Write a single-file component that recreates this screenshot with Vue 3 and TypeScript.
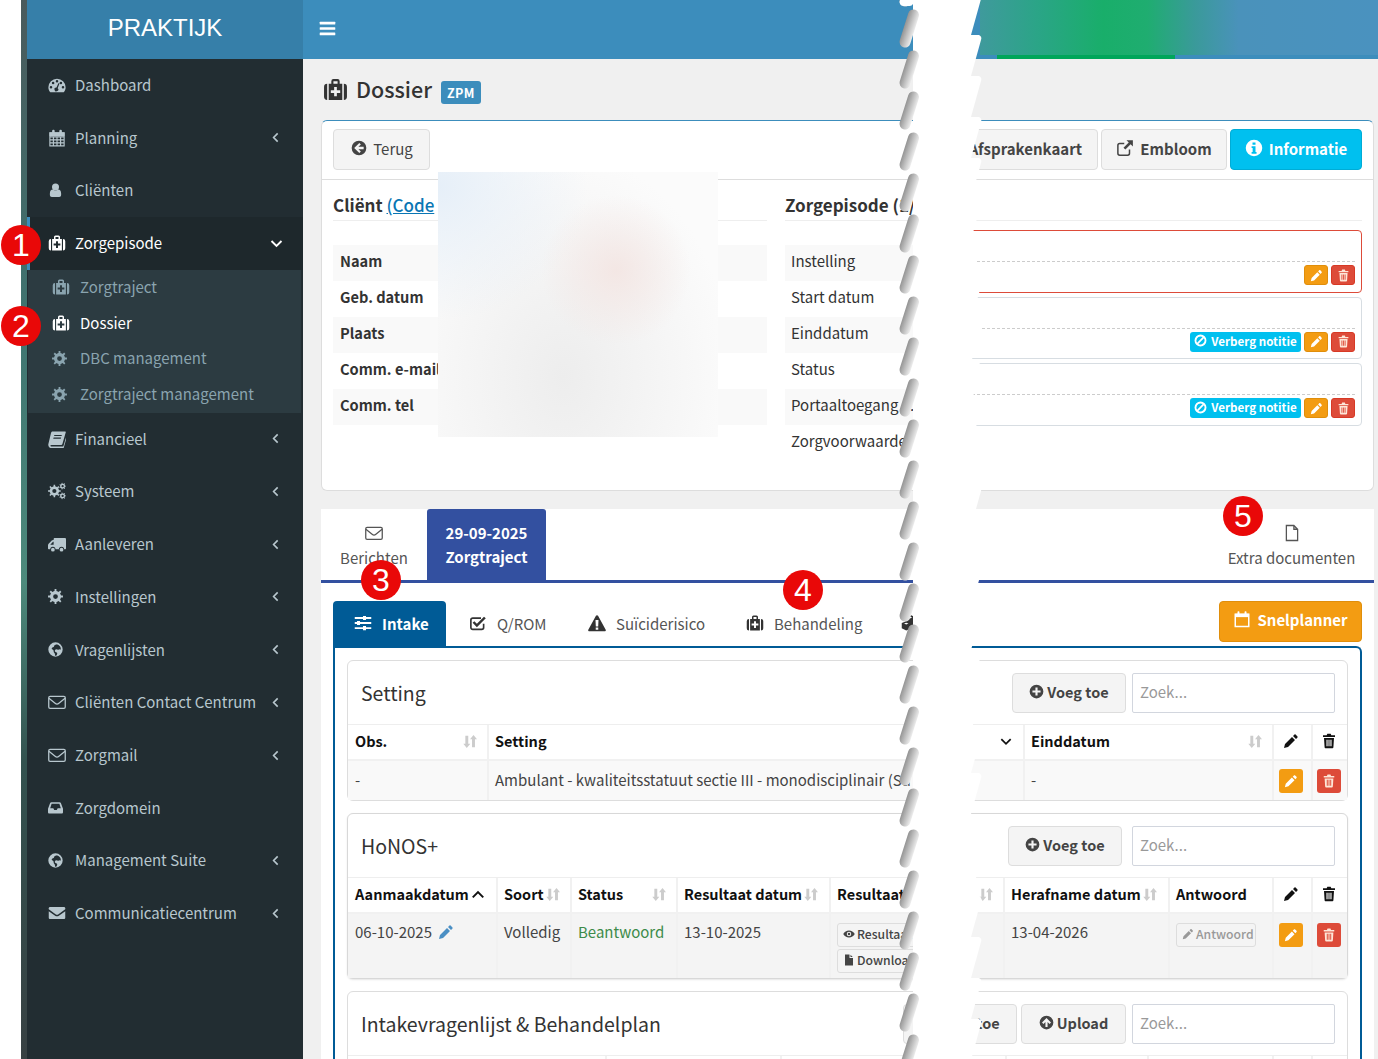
<script setup lang="ts">
// small gear outline, used by the cog icons
function gear(cx: number, cy: number, r: number, hole: number, teeth = 8): string {
  const pts: string[] = []
  const step = (Math.PI * 2) / teeth
  for (let i = 0; i < teeth; i++) {
    const a = i * step
    const w = step * 0.22
    const inner = r * 0.74
    const p = [
      [a - step / 2 + w, inner], [a - w, inner], [a - w * 0.7, r], [a + w * 0.7, r], [a + w, inner],
    ]
    for (const [ang, rad] of p) {
      pts.push(`${(cx + Math.cos(ang) * rad).toFixed(2)} ${(cy + Math.sin(ang) * rad).toFixed(2)}`)
    }
  }
  const h = hole
  return `M${pts.join('L')}ZM${cx - h} ${cy}a${h} ${h} 0 1 0 ${h * 2} 0a${h} ${h} 0 1 0 ${-h * 2} 0Z`
}

const icons: Record<string, string> = {
  dashboard: '<path fill-rule="evenodd" d="M12 3.500A11.500 11.500 0 0 0 .5 15c0 2.600.8 4.600 2.200 6.300.3.300.6.400 1 .400h16.600c.4 0 .7-.1 1-.4 1.400-1.700 2.200-3.700 2.200-6.300A11.500 11.500 0 0 0 12 3.500zM4 13.200a1.700 1.700 0 1 0 0 3.400 1.700 1.700 0 1 0 0-3.400zM6.800 7.600a1.700 1.700 0 1 0 0 3.400 1.700 1.700 0 1 0 0-3.400zM12 5.200a1.700 1.700 0 1 0 0 3.400 1.700 1.700 0 1 0 0-3.400zM17.200 7.600a1.700 1.700 0 1 0 0 3.400 1.700 1.700 0 1 0 0-3.400zM20 13.200a1.700 1.700 0 1 0 0 3.400 1.700 1.700 0 1 0 0-3.400zM13.800 9.500l-2.600 6a2.500 2.500 0 1 0 1.700.7l2.400-6.100z"/>',
  calendar: '<path fill="none" stroke="currentColor" stroke-width="1.500" d="M2.500 5h19v17.500h-19zM2.500 10.500h19M2.500 14.500h19M2.500 18.500h19M7.200 10.500v12M12 10.500v12M16.800 10.500v12"/><rect x="2" y="4.500" width="20" height="5"/><rect x="5.500" y="1" width="3.400" height="6" rx="1.500"/><rect x="15.100" y="1" width="3.400" height="6" rx="1.500"/>',
  user: '<circle cx="12" cy="7" r="5.600"/><path d="M3 20v-2.500c0-4 1.800-6.500 4.800-6.500 1.200 1 2.600 1.600 4.200 1.600s3-.6 4.200-1.600c3 0 4.800 2.500 4.800 6.500V20c0 2-1.400 3-3 3H6c-1.600 0-3-1-3-3z"/>',
  medkit: '<path fill-rule="evenodd" d="M5.500 6.500H8V4a2 2 0 0 1 2-2h4a2 2 0 0 1 2 2v2.500h2.500V22h-13zM10 4v2.500h4V4zM10.700 9.500v3.200H7.500v2.600h3.200v3.200h2.600v-3.200h3.200v-2.600h-3.200V9.500z"/><path d="M4 6.500V22a3 3 0 0 1-3-3V9.500a3 3 0 0 1 3-3zM20 6.500a3 3 0 0 1 3 3V19a3 3 0 0 1-3 3z"/>',
  cog: `<path fill-rule="evenodd" d="${gear(12, 12, 12, 3.8)}"/>`,
  book: '<path fill-rule="evenodd" d="M6 2h17c.6 0 .9.500.7 1l-4.500 15.500c-.3.900-1 1.500-2 1.500H4.500c-.8 0-1.200.300-1.300.8-.1.500.3 1.200 1.300 1.200h15c.5 0 1-.3 1.100-.8l4-13.200.400 1.500-4 14c-.2.600-.8 1-1.500 1H4.500C2 24-.2 21.500.5 18.500L4 4c.3-1.200 1-2 2-2zM8.500 6.500l-.5 1.500h10l.5-1.500zM7.500 10l-.5 1.500h10l.5-1.500z"/>',
  cogs: `<path fill-rule="evenodd" d="${gear(8.5, 12, 8.5, 2.8)}"/><path fill-rule="evenodd" d="${gear(19.5, 5.5, 4.5, 1.5, 7)}"/><path fill-rule="evenodd" d="${gear(19.5, 18.5, 4.5, 1.5, 7)}"/>`,
  truck: '<path fill-rule="evenodd" d="M9 4h13.500c.8 0 1.500.7 1.500 1.500V18c0 .6-.4 1-1 1h-1.500a3.500 3.500 0 0 0-7 0H10a3.500 3.500 0 0 0-7 0H1c-.6 0-1-.4-1-1v-4.500c0-.8.300-1.400.8-2L5 7.300c.4-.5 1-.8 1.700-.8H7.500V5.500C7.500 4.700 8.200 4 9 4zM3 13h4.500V9H6.700z"/><circle cx="6.500" cy="19.500" r="2.500"/><circle cx="18" cy="19.500" r="2.500"/>',
  globe: '<path fill-rule="evenodd" d="M12 .5a11.500 11.500 0 1 0 0 23 11.500 11.500 0 0 0 0-23zM14 3.500c2 .5 3.800 1.600 5 3.200 1.200 1.500 1.600 3.300 1.500 5.300-.7.300-1.200-.4-1.900-.4-1 0-1.300 1-2.400.7-1.500-.3-2.800-1-4-.5-1.200.6-1.600 2.700-.7 3.800.8 1 2.300.8 3 1.600.5.800.2 1.800-.1 2.700-.5 1-1.100 2-2.300 2.400-.8-.6-1-1.700-1-2.700 0-1.300-.8-1.800-1.500-2.800-.8-1.200-.2-2.600-1-3.700-.7-.9-2-.9-2.500-1.900-.3-.6-.1-1.400.4-1.900.9-.9 2.200-.7 2.900-1.700.5-.8.300-1.800 1-2.500.9-.8 2.400-.8 3.600-1.100z"/>',
  envelopeO: '<path fill="none" stroke="currentColor" stroke-width="1.700" d="M2.800 4.500h18.400c1 0 1.800.8 1.800 1.800v12.400c0 1-.8 1.800-1.800 1.800H2.800c-1 0-1.800-.8-1.800-1.800V6.300c0-1 .8-1.800 1.800-1.800z"/><path fill="none" stroke="currentColor" stroke-width="1.700" d="M1.200 7l8.300 6.800c1.500 1.200 3.500 1.200 5 0L22.800 7"/>',
  inbox: '<path fill-rule="evenodd" d="M5.500 3.500h13c.9 0 1.700.500 2.100 1.300L24 14v5.500c0 1.100-.9 2-2 2H2c-1.100 0-2-.9-2-2V14L3.400 4.800c.4-.8 1.200-1.300 2.100-1.300zM5.800 6L3.500 13h5l1.500 3h4l1.500-3h5L18.200 6z"/>',
  envelope: '<path d="M1 7l9.500 7c.9.600 2.100.600 3 0L23 7V5.800C23 4.800 22.200 4 21.200 4H2.800C1.800 4 1 4.800 1 5.800z"/><path d="M1 9.500V18.200c0 1 .8 1.800 1.800 1.800h18.400c1 0 1.800-.8 1.800-1.800V9.500l-8.500 6.200c-1.500 1-3.500 1-5 0z"/>',
  angleLeft: '<path fill="none" stroke="currentColor" stroke-width="2.600" d="M15.500 5.500 9 12l6.500 6.500"/>',
  angleDown: '<path fill="none" stroke="currentColor" stroke-width="3" d="M4 8l8 8 8-8"/>',
  angleUp: '<path fill="none" stroke="currentColor" stroke-width="3.400" d="M3 17l9-9 9 9"/>',
  bars: '<rect x="1" y="2.500" width="22" height="3.800" rx=".8"/><rect x="1" y="10.100" width="22" height="3.800" rx=".8"/><rect x="1" y="17.700" width="22" height="3.800" rx=".8"/>',
  backCircle: '<path fill-rule="evenodd" d="M12 1a11 11 0 1 0 0 22 11 11 0 0 0 0-22zM12.500 4.500l2.300 2.300-3.700 3.500H19v3.400h-7.900l3.700 3.500-2.300 2.300L4.800 12z"/>',
  plusCircle: '<path fill-rule="evenodd" d="M12 1a11 11 0 1 0 0 22 11 11 0 0 0 0-22zM10.300 5.500h3.400v4.800h4.800v3.400h-4.800v4.800h-3.400v-4.800H5.500v-3.400h4.800z"/>',
  upCircle: '<path fill-rule="evenodd" d="M12 1a11 11 0 1 0 0 22 11 11 0 0 0 0-22zM12 4.800l7.200 7.200-2.300 2.300-3.200-3.200V19h-3.400v-7.900l-3.200 3.200L4.800 12z"/>',
  external: '<path fill="none" stroke="currentColor" stroke-width="2" d="M18 14v5c0 1.400-1 2.500-2.500 2.500H5C3.500 21.500 2.500 20.500 2.500 19V8.500C2.500 7 3.500 6 5 6h6"/><path d="M14 1.500h8.500V10l-3-3-7 7-2.500-2.500 7-7z"/>',
  info: '<path fill-rule="evenodd" d="M12 1a11 11 0 1 0 0 22 11 11 0 0 0 0-22zM10 4.500h4v3.200h-4zM8.800 9.800H14v7.500h1.400v2.200H8.800v-2.200h1.400v-5.300H8.800z"/>',
  ban: '<path fill-rule="evenodd" d="M12 1a11 11 0 1 0 0 22 11 11 0 0 0 0-22zM12 4.500c1.500 0 2.900.5 4 1.200L5.700 16A7.500 7.500 0 0 1 12 4.500zM18.300 8A7.500 7.500 0 0 1 8 18.300z"/>',
  pencil: '<path d="M17 2.500c.6-.6 1.500-.6 2.100 0l2.400 2.400c.6.600.6 1.500 0 2.100l-2 2L15 4.500zM13.500 6 18 10.500 7.500 21 1.500 22.500 3 16.500z"/>',
  trash: '<path fill-rule="evenodd" d="M8.500 3.500 9.500 1h5l1 2.500H21V6H3V3.500zM4.500 7.500h15l-.9 14c-.1 1-.9 1.500-1.600 1.500H7c-.8 0-1.500-.6-1.600-1.500zM8.200 10v10h1.700V10zM11.200 10v10h1.600V10zM14.100 10v10h1.700V10z"/>',
  calendarO: '<path fill="none" stroke="currentColor" stroke-width="2" d="M3 5.500h18v16.500H3z"/><rect x="3" y="5" width="18" height="4.500"/><rect x="6" y="1.500" width="2.600" height="5.500" rx="1"/><rect x="15.400" y="1.500" width="2.600" height="5.500" rx="1"/>',
  fileO: '<path fill="none" stroke="currentColor" stroke-width="1.700" d="M4.500 2h10l5 5v15h-15zM14.500 2v5h5"/>',
  eye: '<path fill-rule="evenodd" d="M12 5C7 5 3 8 .5 12c2.500 4 6.500 7 11.500 7s9-3 11.500-7C21 8 17 5 12 5zM12 7.500a4.500 4.500 0 1 1 0 9 4.500 4.500 0 0 1 0-9z"/><circle cx="12" cy="12" r="2.500"/>',
  file: '<path d="M4 1h9v7h7v15H4zM15 1.500 19.500 6H15z"/>',
  sliders: '<path fill-rule="evenodd" d="M1 4h11V2.500h4V4h7v2.500h-7V8h-4V6.500H1zM1 10.700h3V9.200h4v1.500h15v2.600H8v1.500H4v-1.500H1zM1 17.500h11V16h4v1.500h7V20h-7v1.500h-4V20H1z"/>',
  check: '<path fill="none" stroke="currentColor" stroke-width="2.200" d="M19.500 13v5c0 1.500-1 2.500-2.500 2.500H5c-1.500 0-2.500-1-2.500-2.500V8C2.500 6.500 3.500 5.500 5 5.500h11"/><path d="M10.500 17.500 4.800 11.800l2.300-2.300 3.400 3.400L20 3.500l2.400 2.300z"/>',
  warning: '<path fill-rule="evenodd" d="M12 1.500c.6 0 1.100.3 1.400.8l10.200 18.700c.5.900-.1 2-1.400 2H1.800C.5 23-.1 21.900.4 21L10.600 2.300c.3-.5.800-.8 1.400-.8zM10 8l.4 8.500h3.200L14 8zM10.300 18v3h3.400v-3z"/>',
  sort: '<path d="M4 2h5v14h3.500L6.500 23 .5 16H4z"/><path d="M12 8l6-7 6 7h-3.500v14h-5V8z"/>',
  cubes: '<path fill-rule="evenodd" d="M12 1l6 2.500V10l5 2v7l-6 3-5-2.500L7 22l-6-3v-7l5-2V3.500zM12 3.500 9 4.700 12 6l3-1.300zM7 14l-3-1.200L7 11.500l3 1.300z"/>',
}

interface NavItem { label: string; icon: string; more?: boolean }

const navTop: NavItem[] = [
  { label: 'Dashboard', icon: 'dashboard' },
  { label: 'Planning', icon: 'calendar', more: true },
  { label: 'Cliënten', icon: 'user' },
]
const navSub = [
  { label: 'Zorgtraject', icon: 'medkit', on: false },
  { label: 'Dossier', icon: 'medkit', on: true },
  { label: 'DBC management', icon: 'cog', on: false },
  { label: 'Zorgtraject management', icon: 'cog', on: false },
]
const navBottom: NavItem[] = [
  { label: 'Financieel', icon: 'book', more: true },
  { label: 'Systeem', icon: 'cogs', more: true },
  { label: 'Aanleveren', icon: 'truck', more: true },
  { label: 'Instellingen', icon: 'cog', more: true },
  { label: 'Vragenlijsten', icon: 'globe', more: true },
  { label: 'Cliënten Contact Centrum', icon: 'envelopeO', more: true },
  { label: 'Zorgmail', icon: 'envelopeO', more: true },
  { label: 'Zorgdomein', icon: 'inbox' },
  { label: 'Management Suite', icon: 'globe', more: true },
  { label: 'Communicatiecentrum', icon: 'envelope', more: true },
]

const clientRows = ['Naam', 'Geb. datum', 'Plaats', 'Comm. e-mail', 'Comm. tel']
const episodeRows = ['Instelling', 'Start datum', 'Einddatum', 'Status', 'Portaaltoegang ...', 'Zorgvoorwaarde']
const notes = [
  { alert: true, hide: false },
  { alert: false, hide: true },
  { alert: false, hide: true },
]
const subTabs = [
  { label: 'Q/ROM', icon: 'check' },
  { label: 'Suïciderisico', icon: 'warning' },
  { label: 'Behandeling', icon: 'medkit' },
  { label: '', icon: 'cubes' },
]
const badges = [
  { n: 1, cls: 'b1' }, { n: 2, cls: 'b2' }, { n: 3, cls: 'b3' }, { n: 4, cls: 'b4' }, { n: 5, cls: 'b5' },
]
</script>

<template>
  <div class="page">
    <div class="strip"></div>

    <aside class="sidebar">
      <div class="logo">PRAKTIJK</div>
      <nav>
        <a v-for="item in navTop" :key="item.label" class="nav-item">
          <svg class="ic nav-ic" :class="'i-' + item.icon" viewBox="0 0 24 24" v-html="icons[item.icon]"></svg>
          <span>{{ item.label }}</span>
          <svg v-if="item.more" class="ic nav-more" viewBox="0 0 24 24" v-html="icons.angleLeft"></svg>
        </a>
        <a class="nav-item active">
          <svg class="ic nav-ic" viewBox="0 0 24 24" v-html="icons.medkit"></svg>
          <span>Zorgepisode</span>
          <svg class="ic nav-more" viewBox="0 0 24 24" v-html="icons.angleDown"></svg>
        </a>
        <div class="sub">
          <a v-for="s in navSub" :key="s.label" class="sub-item" :class="{ on: s.on }">
            <svg class="ic sub-ic" :class="'i-' + s.icon" viewBox="0 0 24 24" v-html="icons[s.icon]"></svg>
            <span>{{ s.label }}</span>
          </a>
        </div>
        <a v-for="item in navBottom" :key="item.label" class="nav-item">
          <svg class="ic nav-ic" :class="'i-' + item.icon" viewBox="0 0 24 24" v-html="icons[item.icon]"></svg>
          <span>{{ item.label }}</span>
          <svg v-if="item.more" class="ic nav-more" viewBox="0 0 24 24" v-html="icons.angleLeft"></svg>
        </a>
      </nav>
    </aside>

    <main class="main">
      <header class="topbar">
        <svg class="ic burger" viewBox="0 0 24 24" v-html="icons.bars"></svg>
      </header>

      <div class="content">
        <div class="title">
          <svg class="ic title-ic" viewBox="0 0 24 24" v-html="icons.medkit"></svg>
          <h1>Dossier</h1>
          <span class="zpm">ZPM</span>
        </div>

        <section class="box">
          <div class="toolbar">
            <button class="btn back">
              <svg class="ic" viewBox="0 0 24 24" v-html="icons.backCircle"></svg>
              Terug
            </button>
            <div class="toolbar-right">
              <button class="btn strong afspraak">Afsprakenkaart</button>
              <button class="btn strong embloom">
                <svg class="ic" viewBox="0 0 24 24" v-html="icons.external"></svg>
                Embloom
              </button>
              <button class="btn strong info">
                <svg class="ic" viewBox="0 0 24 24" v-html="icons.info"></svg>
                Informatie
              </button>
            </div>
          </div>

          <div class="cols">
            <div class="col-client">
              <h3 class="col-head">Cliënt <a>(Code</a></h3>
              <div class="rows">
                <div v-for="r in clientRows" :key="r" class="row bold">{{ r }}</div>
              </div>
            </div>
            <div class="col-episode">
              <h3 class="col-head">Zorgepisode (1/2)</h3>
              <div class="episode-body">
                <div class="rows episode-rows">
                  <div v-for="r in episodeRows" :key="r" class="row">{{ r }}</div>
                </div>
                <div class="notes">
                  <div v-for="(n, i) in notes" :key="i" class="note" :class="{ alert: n.alert }">
                    <div class="note-text"></div>
                    <div class="note-actions">
                      <button v-if="n.hide" class="xs info">
                        <svg class="ic" viewBox="0 0 24 24" v-html="icons.ban"></svg>
                        Verberg notitie
                      </button>
                      <button class="xs edit"><svg class="ic" viewBox="0 0 24 24" v-html="icons.pencil"></svg></button>
                      <button class="xs del"><svg class="ic" viewBox="0 0 24 24" v-html="icons.trash"></svg></button>
                    </div>
                  </div>
                </div>
              </div>
            </div>
          </div>
        </section>

        <section class="tabbox">
          <div class="tabs">
            <div class="tab berichten">
              <svg class="ic" viewBox="0 0 24 24" v-html="icons.envelopeO"></svg>
              <span>Berichten</span>
            </div>
            <div class="tab current">
              <span>29-09-2025</span>
              <span>Zorgtraject</span>
            </div>
            <div class="tab extra">
              <svg class="ic" viewBox="0 0 24 24" v-html="icons.fileO"></svg>
              <span>Extra documenten</span>
            </div>
          </div>

          <div class="tab-body">
            <div class="subbar">
              <div class="subtabs">
                <div class="subtab intake">
                  <svg class="ic" viewBox="0 0 24 24" v-html="icons.sliders"></svg>
                  Intake
                </div>
                <div v-for="t in subTabs" :key="t.icon" class="subtab">
                  <svg class="ic" viewBox="0 0 24 24" v-html="icons[t.icon]"></svg>
                  {{ t.label }}
                </div>
              </div>
              <button class="btn strong planner">
                <svg class="ic" viewBox="0 0 24 24" v-html="icons.calendarO"></svg>
                Snelplanner
              </button>
            </div>

            <div class="panel">
              <!-- Setting -->
              <div class="card">
                <div class="card-head">
                  <h4>Setting</h4>
                  <div class="card-tools">
                    <button class="btn tool">
                      <svg class="ic" viewBox="0 0 24 24" v-html="icons.plusCircle"></svg>Voeg toe
                    </button>
                    <div class="search">Zoek...</div>
                  </div>
                </div>
                <div class="grid setting head">
                  <div class="th">Obs.<svg class="ic sort" viewBox="0 0 24 24" v-html="icons.sort"></svg></div>
                  <div class="th">Setting<svg class="ic sort dark" viewBox="0 0 24 24" v-html="icons.angleDown"></svg></div>
                  <div class="th">Einddatum<svg class="ic sort" viewBox="0 0 24 24" v-html="icons.sort"></svg></div>
                  <div class="th act"><svg class="ic" viewBox="0 0 24 24" v-html="icons.pencil"></svg></div>
                  <div class="th act"><svg class="ic" viewBox="0 0 24 24" v-html="icons.trash"></svg></div>
                </div>
                <div class="grid setting body">
                  <div class="td">-</div>
                  <div class="td clip">Ambulant - kwaliteitsstatuut sectie III - monodisciplinair (Su</div>
                  <div class="td">-</div>
                  <div class="td act"><button class="sq edit"><svg class="ic" viewBox="0 0 24 24" v-html="icons.pencil"></svg></button></div>
                  <div class="td act"><button class="sq del"><svg class="ic" viewBox="0 0 24 24" v-html="icons.trash"></svg></button></div>
                </div>
              </div>

              <!-- HoNOS+ -->
              <div class="card raised">
                <div class="card-head">
                  <h4>HoNOS+</h4>
                  <div class="card-tools">
                    <button class="btn tool shifted">
                      <svg class="ic" viewBox="0 0 24 24" v-html="icons.plusCircle"></svg>Voeg toe
                    </button>
                    <div class="search">Zoek...</div>
                  </div>
                </div>
                <div class="grid honos head">
                  <div class="th tight">Aanmaakdatum<svg class="ic sort dark" viewBox="0 0 24 24" v-html="icons.angleUp"></svg></div>
                  <div class="th tight">Soort<svg class="ic sort" viewBox="0 0 24 24" v-html="icons.sort"></svg></div>
                  <div class="th">Status<svg class="ic sort" viewBox="0 0 24 24" v-html="icons.sort"></svg></div>
                  <div class="th tight">Resultaat datum<svg class="ic sort" viewBox="0 0 24 24" v-html="icons.sort"></svg></div>
                  <div class="th">Resultaat<svg class="ic sort" viewBox="0 0 24 24" v-html="icons.sort"></svg></div>
                  <div class="th tight">Herafname datum<svg class="ic sort" viewBox="0 0 24 24" v-html="icons.sort"></svg></div>
                  <div class="th">Antwoord</div>
                  <div class="th act"><svg class="ic" viewBox="0 0 24 24" v-html="icons.pencil"></svg></div>
                  <div class="th act"><svg class="ic" viewBox="0 0 24 24" v-html="icons.trash"></svg></div>
                </div>
                <div class="grid honos body tall">
                  <div class="td">06-10-2025 <svg class="ic mini-pen" viewBox="0 0 24 24" v-html="icons.pencil"></svg></div>
                  <div class="td">Volledig</div>
                  <div class="td green">Beantwoord</div>
                  <div class="td">13-10-2025</div>
                  <div class="td stack">
                    <button class="chip"><svg class="ic" viewBox="0 0 24 24" v-html="icons.eye"></svg>Resultaat</button>
                    <button class="chip"><svg class="ic" viewBox="0 0 24 24" v-html="icons.file"></svg>Download</button>
                  </div>
                  <div class="td">13-04-2026</div>
                  <div class="td stack">
                    <button class="chip muted"><svg class="ic" viewBox="0 0 24 24" v-html="icons.pencil"></svg>Antwoord</button>
                  </div>
                  <div class="td act"><button class="sq edit"><svg class="ic" viewBox="0 0 24 24" v-html="icons.pencil"></svg></button></div>
                  <div class="td act"><button class="sq del"><svg class="ic" viewBox="0 0 24 24" v-html="icons.trash"></svg></button></div>
                </div>
              </div>

              <!-- Intakevragenlijst -->
              <div class="card">
                <div class="card-head">
                  <h4>Intakevragenlijst &amp; Behandelplan</h4>
                  <div class="card-tools">
                    <button class="btn tool">
                      <svg class="ic" viewBox="0 0 24 24" v-html="icons.plusCircle"></svg>Voeg toe
                    </button>
                    <button class="btn tool upload">
                      <svg class="ic" viewBox="0 0 24 24" v-html="icons.upCircle"></svg>Upload
                    </button>
                    <div class="search">Zoek...</div>
                  </div>
                </div>
                <div class="grid intake-cols head">
                  <div class="th"></div><div class="th"></div><div class="th"></div>
                  <div class="th"></div><div class="th"></div><div class="th"></div><div class="th"></div>
                </div>
              </div>
            </div>
          </div>
        </section>
      </div>

      <!-- blurred-out patient data and header account -->
      <div class="blur-patch"></div>
      <div class="header-patch"></div>
      <div class="header-line"></div>
    </main>

    <!-- torn paper gap over the middle of the page -->
    <svg class="tear" width="95" height="1059" viewBox="0 0 95 1059">
      <defs>
        <linearGradient id="tearShade" gradientUnits="userSpaceOnUse" x1="7" y1="17" x2="22" y2="22">
          <stop offset="0" stop-color="#808080" />
          <stop offset="1" stop-color="#fff" />
        </linearGradient>
        <pattern id="tearLeft" width="30" height="41" y="8" patternUnits="userSpaceOnUse">
          <path d="M18.500 7 10 34" stroke="url(#tearShade)" stroke-width="11" stroke-linecap="round" fill="none" />
        </pattern>
        <pattern id="tearRight" width="95" height="41" y="35" patternUnits="userSpaceOnUse">
          <path d="M0 0H84a4 4 0 0 1 2 5L76 41H0z" fill="#fff" />
        </pattern>
      </defs>
      <rect x="18" width="69" height="1059" fill="url(#tearRight)" />
      <rect x="0" width="30" height="1059" fill="url(#tearLeft)" />
      <path d="M5 0h13v4a4 4 0 0 1-4 2H9a4 4 0 0 1-4-6z" fill="#fff" />
    </svg>

    <span v-for="b in badges" :key="b.n" class="badge" :class="b.cls">{{ b.n }}</span>
  </div>
</template>

<style>
html,
body {
  margin: 0;
  background: #fff;
}
</style>

<style scoped>
.page {
  position: relative;
  display: flex;
  width: 1378px;
  height: 1059px;
  overflow: hidden;
  padding-left: 21px;
  box-sizing: border-box;
  background: #fff;
  font-family: 'Noto Sans CJK JP', 'Lato', sans-serif;
  font-size: 15px;
  color: #333;
}

button {
  font-family: inherit;
  cursor: pointer;
}

.ic {
  display: inline-block;
  width: 16px;
  height: 16px;
  fill: currentColor;
  flex-shrink: 0;
}

.strip {
  width: 6px;
  flex-shrink: 0;
  background: linear-gradient(180deg, #4a5a5c 0%, #3f7470 30%, #4d8a7c 55%, #33524f 72%, #384143 100%);
}

/* sidebar */
.sidebar {
  width: 276px;
  flex-shrink: 0;
  background: #222d32;
  color: #b8c7ce;
}

.logo {
  height: 59px;
  background: #367fa9;
  color: #fff;
  font-family: 'Liberation Sans', sans-serif;
  font-size: 24px;
  line-height: 56px;
  text-align: center;
}

.nav-item {
  display: flex;
  align-items: center;
  height: 52.73px;
  padding-left: 21px;
  padding-bottom: 1px;
  box-sizing: border-box;
  line-height: 20px;
}

.nav-ic {
  width: 18px;
  height: 18px;
  margin-right: 9px;
}

.nav-ic.i-cog,
.nav-ic.i-globe,
.nav-ic.i-inbox {
  width: 15px;
  height: 15px;
  margin-right: 12px;
}

.nav-ic.i-user {
  width: 15px;
  height: 16px;
  margin-right: 12px;
}

.nav-more {
  margin-left: auto;
  margin-right: 20px;
  width: 15px;
  height: 15px;
}

.nav-item.active {
  background: #1e282c;
  color: #fff;
  border-left: 3px solid #3c8dbc;
  padding-left: 18px;
}

.nav-item.active .nav-more {
  margin-right: 19px;
}

.sub {
  height: 143px;
  margin: 0 2px 0 1px;
  background: #2c3b41;
}

.sub-item {
  display: flex;
  align-items: center;
  height: 35.75px;
  padding-left: 24px;
  padding-bottom: 2px;
  box-sizing: border-box;
  color: #8aa4af;
  line-height: 20px;
}

.sub-item.on {
  color: #fff;
}

.sub-ic {
  width: 18px;
  height: 18px;
  margin-right: 10px;
}

.sub-ic.i-cog {
  width: 15px;
  height: 15px;
  margin-right: 13px;
}

/* main */
.main {
  position: relative;
  width: 1075px;
  flex-shrink: 0;
  background: #f0f0f0;
}

.topbar {
  display: flex;
  align-items: center;
  height: 59px;
  padding-left: 16px;
  padding-bottom: 3px;
  box-sizing: border-box;
  background: #3c8dbc;
  color: #fff;
}

.burger {
  width: 17px;
  height: 17px;
}

.content {
  width: 1053px;
  margin-left: 18px;
}

.title {
  display: flex;
  align-items: center;
  height: 61px;
  color: #333;
}

.title-ic {
  width: 25px;
  height: 25px;
  margin: 0 8px 0 2px;
}

.title h1 {
  margin: 0 0 2px;
  font-size: 21.500px;
  font-weight: 500;
  line-height: 30px;
}

.zpm {
  margin: 6px 0 0 9px;
  padding: 0 6px;
  background: #3c8dbc;
  border-radius: 3px;
  color: #fff;
  font-size: 12.500px;
  font-weight: 700;
  line-height: 23px;
  letter-spacing: .4px;
}

.box {
  height: 371px;
  box-sizing: border-box;
  background: #fff;
  border: 1px solid #ddd;
  border-top-color: #3c8dbc;
  border-radius: 6px;
}

.toolbar {
  display: flex;
  justify-content: space-between;
  padding: 8px 11px 9px;
  border-bottom: 1px solid #ddd;
}

.toolbar-right {
  display: flex;
  gap: 3px;
}

.btn {
  display: inline-flex;
  align-items: center;
  justify-content: center;
  gap: 6px;
  height: 41px;
  padding: 0 15px 3px;
  box-sizing: border-box;
  background: #f4f4f4;
  border: 1px solid #ddd;
  border-radius: 4px;
  color: #444;
  font-size: 15px;
}

.btn.back {
  width: 97px;
  padding: 0 0 3px 1px;
  color: #444;
}

.btn.strong {
  font-weight: 600;
}

.btn.afspraak {
  width: 140px;
  justify-content: flex-end;
}

.btn.embloom {
  width: 126px;
}

.btn.strong .ic {
  width: 18px;
  height: 18px;
}

.btn.info {
  width: 132px;
  background: #00c0ef;
  border-color: #00acd6;
  color: #fff;
}

.cols {
  display: flex;
  gap: 18px;
  padding: 11px 11px 0;
}

.col-client {
  width: 434px;
  flex-shrink: 0;
}

.col-episode {
  flex: 1;
  min-width: 0;
}

.col-head {
  height: 29px;
  margin: 0;
  border-bottom: 1px solid #eee;
  color: #333;
  font-size: 17px;
  font-weight: 600;
  line-height: 27px;
  white-space: nowrap;
  overflow: hidden;
}

.col-head a {
  color: #0a76b4;
  text-decoration: underline;
  font-weight: 500;
}

.rows {
  margin-top: 24px;
}

.row {
  height: 36px;
  padding-left: 6px;
  line-height: 32px;
  white-space: nowrap;
  overflow: hidden;
}

.row:nth-child(odd) {
  background: #f9f9f9;
}

.row.bold {
  padding-left: 7px;
  font-size: 14.600px;
  font-weight: 600;
}

.episode-body {
  display: flex;
}

.episode-rows {
  width: 170px;
  flex-shrink: 0;
}

.notes {
  flex: 1;
  display: flex;
  flex-direction: column;
  gap: 4px;
  padding-top: 9px;
}

.note {
  height: 62.500px;
  box-sizing: border-box;
  padding: 0 6px;
  border: 1px solid #d7dde2;
  border-radius: 4px;
}

.note.alert {
  border-color: #dd4b39;
}

.note-text {
  height: 30px;
  border-bottom: 1px dashed #ccc;
}

.note-actions {
  display: flex;
  justify-content: flex-end;
  gap: 3px;
  margin-top: 3px;
}

.xs {
  display: inline-flex;
  align-items: center;
  justify-content: center;
  height: 20px;
  min-width: 24px;
  padding: 0;
  border: 1px solid transparent;
  border-radius: 3px;
  color: #fff;
}

.xs .ic {
  width: 13px;
  height: 13px;
}

.xs.info {
  gap: 4px;
  width: 111px;
  padding-bottom: 2px;
  background: #00c0ef;
  font-size: 11.600px;
  font-weight: 600;
  white-space: nowrap;
}

.edit {
  background: #f39c12;
  border-color: #e08e0b;
  color: #fff;
}

.del {
  background: #dd4b39;
  border-color: #d73925;
  color: #fde6d8;
}

/* tabs */
.tabbox {
  margin-top: 18px;
  background: #fff;
}

.tabs {
  display: flex;
  height: 71px;
  padding: 0 7px 0 12px;
  border-bottom: 3px solid #3350a0;
}

.tab {
  display: flex;
  flex-direction: column;
  align-items: center;
  justify-content: center;
  gap: 5px;
  color: #555;
  line-height: 22px;
}

.tab .ic {
  width: 18px;
  height: 18px;
}

.berichten {
  width: 82px;
  margin-right: 12px;
  padding-top: 4px;
}

.current {
  width: 119px;
  gap: 2px;
  background: #3350a0;
  border-radius: 3px 3px 0 0;
  color: #fff;
  font-weight: 700;
}

.extra {
  margin-left: auto;
  width: 151px;
  padding-top: 4px;
}

.tab-body {
  padding: 18px 12px 0;
}

.subbar {
  display: flex;
  justify-content: space-between;
  height: 45px;
}

.subtabs {
  display: flex;
}

.subtab {
  display: flex;
  align-items: center;
  gap: 10px;
  height: 45px;
  padding: 0 0 1px 23px;
  box-sizing: border-box;
  width: 124px;
  color: #555;
  white-space: nowrap;
}

.subtab:nth-child(2) {
  width: 119px;
}

.subtab:nth-child(3) {
  width: 158px;
}

.subtab:nth-child(4) {
  width: 155px;
}

.subtab .ic {
  width: 18px;
  height: 18px;
  color: #333;
}

.subtab.intake {
  width: 113px;
  padding-left: 21px;
  background: #005b96;
  border-radius: 4px 4px 0 0;
  color: #fff;
  font-weight: 700;
}

.subtab.intake .ic {
  color: #fff;
}

.btn.planner {
  width: 143px;
  padding-bottom: 5px;
  background: #f39c12;
  border-color: #e08e0b;
  color: #fff;
}

.panel {
  padding: 12px;
  border: 2px solid #005b96;
  border-bottom: 0;
  border-radius: 0 6px 0 0;
  background: #fff;
}

.card {
  margin-bottom: 12px;
  border: 1px solid #ddd;
  border-radius: 6px;
  background: #fff;
}

.card.raised {
  box-shadow: 0 1px 2px rgba(0, 0, 0, .1);
  border-color: #d8d8d8;
}

.card-head {
  display: flex;
  align-items: center;
  justify-content: space-between;
  height: 63px;
  padding: 1px 12px 0 13px;
  box-sizing: border-box;
}

.card-head h4 {
  margin: 0;
  color: #333;
  font-size: 19.500px;
  font-weight: 400;
  line-height: 28px;
}

.card-tools {
  display: flex;
  gap: 6px;
}

.btn.tool {
  width: 114px;
  height: 40px;
  gap: 3px;
  padding: 0 0 3px;
  font-size: 14.500px;
  font-weight: 600;
}

.btn.tool .ic {
  width: 15px;
  height: 15px;
}

.btn.tool.shifted {
  margin-right: 4px;
}

.btn.tool.upload {
  width: 105px;
  margin-left: -2px;
}

.search {
  width: 203px;
  height: 40px;
  box-sizing: border-box;
  padding-left: 7px;
  border: 1px solid #d2d6de;
  border-radius: 2px;
  color: #999;
  line-height: 36px;
}

.grid {
  display: grid;
}

.setting {
  grid-template-columns: 139px 536px 249px 39px 37px;
}

.honos {
  grid-template-columns: 148px 74px 106px 153px 174px 165px 104px 39px 37px;
}

.intake-cols {
  grid-template-columns: 257px 175px 225px 142px 125px 39px 37px;
}

.head {
  height: 37px;
  box-sizing: border-box;
  border-top: 1px solid #eee;
  border-bottom: 2px solid #f1f1f1;
}

.th {
  display: flex;
  align-items: center;
  justify-content: space-between;
  padding: 0 10px 4px 6px;
  border-left: 2px solid #f1f1f1;
  color: #111;
  font-size: 14.500px;
  font-weight: 700;
  white-space: nowrap;
  overflow: hidden;
}

.th:first-child,
.td:first-child {
  border-left: 0;
  padding-left: 7px;
}

.th.tight {
  justify-content: flex-start;
  gap: 2px;
  padding-right: 0;
}

.th.act {
  justify-content: center;
  padding: 0 4px 2px 0;
}

.sort {
  width: 14px;
  height: 15px;
  margin-top: 2px;
  color: #ccc;
}

.sort.dark {
  color: #111;
}

.body {
  height: 39px;
  background: #f9f9f9;
}

.body.tall {
  height: 64px;
  background: #f4f4f4;
}

.td {
  padding: 0 6px;
  border-left: 2px solid #f1f1f1;
  line-height: 38px;
  color: #444;
  white-space: nowrap;
  overflow: hidden;
}

.tall .td {
  line-height: 35px;
}

.td.act {
  display: flex;
  justify-content: center;
  padding: 8px 4px 0 0;
}

.tall .td.act {
  padding-top: 9px;
}

.td.green {
  color: #3d8b4a;
}

.td.stack {
  display: flex;
  flex-direction: column;
  align-items: flex-start;
  gap: 2px;
  padding-top: 9px;
}

.mini-pen {
  width: 16px;
  height: 16px;
  margin-left: 3px;
  color: #4a8fc4;
  vertical-align: -2px;
}

.sq {
  display: inline-flex;
  align-items: center;
  justify-content: center;
  width: 24px;
  height: 24px;
  padding: 0;
  border: 1px solid transparent;
  border-radius: 3px;
}

.sq .ic {
  width: 14px;
  height: 14px;
}

.chip {
  display: inline-flex;
  align-items: center;
  gap: 2px;
  height: 24px;
  padding: 0 4px 2px 5px;
  background: #f4f4f4;
  border: 1px solid #ddd;
  border-radius: 3px;
  color: #444;
  font-size: 12.200px;
  font-weight: 500;
  line-height: 20px;
}

.chip .ic {
  width: 12px;
  height: 12px;
}

.chip.muted {
  color: #999;
  width: 80px;
}

/* overlays */
.blur-patch {
  position: absolute;
  left: 135px;
  top: 172px;
  width: 280px;
  height: 265px;
  background:
    radial-gradient(circle at 178px 98px, rgba(243, 228, 225, .85) 0, rgba(243, 228, 225, 0) 75px),
    radial-gradient(ellipse at 0 15px, #e6eff8 0, rgba(230, 239, 248, 0) 150px),
    radial-gradient(ellipse at 125px 205px, #ededed 0, rgba(237, 237, 237, 0) 170px),
    #fbfbfb;
}

.header-patch {
  position: absolute;
  left: 677px;
  top: 0;
  width: 398px;
  height: 55px;
  background: linear-gradient(90deg, #3f9a9c 0%, #2aa586 15%, #19ae6a 31%, #1fad70 42%, #3a9a9a 54%, #4a92bb 65%, #4a92bf 100%);
}

.header-line {
  position: absolute;
  left: 694px;
  top: 55px;
  width: 178px;
  height: 4px;
  background: #00a65a;
}

.tear {
  position: absolute;
  left: 895px;
  top: 0;
}

.badge {
  position: absolute;
  width: 40px;
  height: 40px;
  border-radius: 50%;
  background: #e90808;
  color: #fff;
  font-family: 'Liberation Sans', sans-serif;
  font-size: 32px;
  line-height: 40px;
  text-align: center;
}

.b1 { left: 1px; top: 225px; }
.b2 { left: 1px; top: 306px; }
.b3 { left: 361px; top: 560px; }
.b4 { left: 783px; top: 570px; }
.b5 { left: 1223px; top: 496px; }
</style>
